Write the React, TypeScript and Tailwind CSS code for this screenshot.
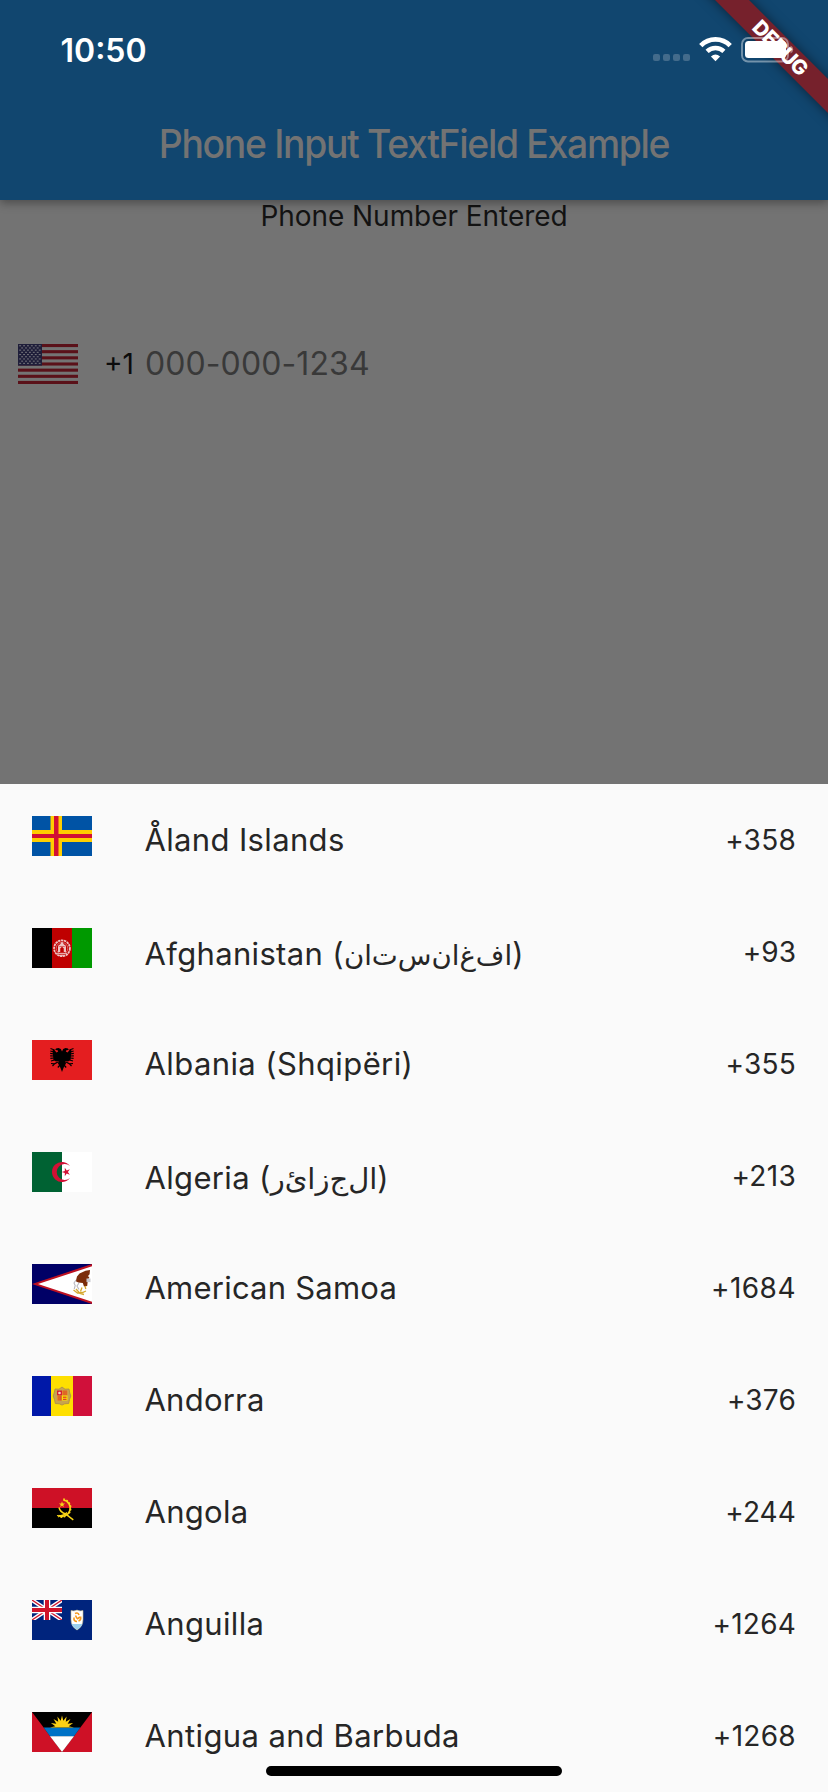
import type { ReactNode } from "react";

function Flag({ children }: { children: ReactNode }) {
  return (
    <svg className="block h-10 w-[60px] shrink-0" viewBox="0 0 60 40">
      {children}
    </svg>
  );
}

const starPoints = (cx: number, cy: number, outer: number, inner: number, count: number, start: number) =>
  Array.from({ length: count * 2 }, (_, i) => {
    const r = i % 2 ? inner : outer;
    const a = start + (i * Math.PI) / count;
    return `${(cx + r * Math.cos(a)).toFixed(2)},${(cy + r * Math.sin(a)).toFixed(2)}`;
  }).join(" ");

function UnitedStates() {
  const stars = [];
  for (let r = 0; r < 9; r++) {
    for (let c = 0; c < (r % 2 ? 5 : 6); c++) {
      stars.push(
        <rect key={`${r}-${c}`} x={1.2 + c * 3.9 + (r % 2 ? 1.95 : 0)} y={1.2 + r * 2.2} width="1.9" height="1.1" fill="#707078" />,
      );
    }
  }
  return (
    <Flag>
      <rect width="60" height="40" fill="#747474" />
      {[0, 1, 2, 3, 4, 5, 6].map((i) => (
        <rect key={i} y={i * 6.154} width="60" height="3.077" fill="#5a1119" />
      ))}
      <rect width="24" height="21.6" fill="#1f1e3a" />
      {stars}
    </Flag>
  );
}

function Aland() {
  return (
    <Flag>
      <rect width="60" height="40" fill="#0053a5" />
      <path d="M18.500 0h11.500v40h-11.500zM0 14h60v12h-60z" fill="#ffce00" />
      <path d="M22 0h4.500v40h-4.500zM0 18h60v4h-60z" fill="#d21034" />
    </Flag>
  );
}

function Afghanistan() {
  return (
    <Flag>
      <rect width="20" height="40" fill="#000" />
      <rect x="20" width="20" height="40" fill="#bf0000" />
      <rect x="40" width="20" height="40" fill="#009900" />
      <circle cx="30" cy="20.3" r="7.900" fill="none" stroke="#eec4c4" strokeWidth="1.800" strokeDasharray="2.400 0.600" />
      <circle cx="30" cy="20.300" r="5.800" fill="none" stroke="#dd8080" strokeWidth="0.800" />
      <path d="M26 24v-5q0-2 2-2.400l2-3.200l2 3.200q2 .4 2 2.400v5z" fill="#eec4c4" />
      <path d="M28.500 24v-3.500q1.500-2.500 3 0v3.500zM27.300 18.500h5.400" fill="#bf0000" stroke="#bf0000" strokeWidth=".5" />
      <path d="M25 25.300h10M27 27.300h6" stroke="#eec4c4" strokeWidth="1" />
    </Flag>
  );
}

function EagleHalf() {
  return (
    <g>
      <path d="M30 11.500L28.800 9L26.500 8L24 8.600L23.200 10L25.600 10.300L26.200 11.500L24.500 12.500L22 9.500L20.500 10.500L21.500 20L24 21.500L26.500 21L26 23.500L27.500 26L28.500 28L30 32Z" fill="#000" />
      <path d="M22.500 10L18.500 8.600M22 12L18.300 11M22 14L18.200 13.400M22 16L18.200 15.900M22 18L18.400 18.400M22.500 20L19 21" stroke="#000" strokeWidth="1.100" />
      <path d="M26 22L22.500 23.800L19 23.500M22.500 23.800L20.500 26M28 25L25.800 27.500" fill="none" stroke="#000" strokeWidth="1.200" />
    </g>
  );
}

function Albania() {
  return (
    <Flag>
      <rect width="60" height="40" fill="#e41e20" />
      <EagleHalf />
      <g transform="matrix(-1 0 0 1 60 0)">
        <EagleHalf />
      </g>
    </Flag>
  );
}

function Algeria() {
  return (
    <Flag>
      <rect width="30" height="40" fill="#006233" />
      <rect x="30" width="30" height="40" fill="#fff" />
      <path d="M38 14A10 10 0 1 0 38 26A8 8 0 1 1 38 14z" fill="#d21034" />
      <polygon points={starPoints(34.2, 20, 4.5, 1.7, 5, Math.PI)} fill="#d21034" />
    </Flag>
  );
}

function AmericanSamoa() {
  return (
    <Flag>
      <rect width="60" height="40" fill="#006" />
      <path d="M0 20L60 0v40z" fill="#bd1021" />
      <path d="M6 20L60 2.300v35.400z" fill="#fff" />
      <path d="M58 6l-4.500 .8-6 2.800-2.500 2.800-1.200 4.800 2.500 1.200 4.500 .6 1.200 3.500 3.200-.5 .6-5.500 1.600-3.500-1.600-.8 1.800-2z" fill="#7b2d0b" />
      <path d="M44 16l-2 3 1.200 2.500-1 3.500M47 19l-2 3 2 3.500" fill="none" stroke="#b9b9c0" strokeWidth="1.100" />
      <path d="M41.500 26l4 3 5-.5 3.500-1.500M44 25l4 4.500 4 1M50 23.500l-1.500 4M53 22l.8 3" fill="none" stroke="#d6a92e" strokeWidth="1.300" />
      <rect x="54.500" y="14.500" width="4" height="3.600" fill="#c9c9cf" />
    </Flag>
  );
}

function Andorra() {
  return (
    <Flag>
      <rect width="19" height="40" fill="#0018a8" />
      <rect x="19" width="22" height="40" fill="#fedf00" />
      <rect x="41" width="19" height="40" fill="#d0103a" />
      <path d="M23 13l4 .2 3-2.200 3 2.200 4-.2 .8 4 1 3-1.300 3.500-.8 4-4 .3-2.700 1.300-2.700-1.300-4-.3-.8-4-1.300-3.500 1-3z" fill="#c7a44e" stroke="#a8894c" strokeWidth=".8" />
      <rect x="25" y="14.500" width="5" height="5" fill="#d5202f" />
      <circle cx="27.500" cy="17" r="1.300" fill="#f4d9c0" />
      <path d="M30 14.500h5.500v5h-5.500zM25 19.500h5v5h-5z" fill="#e8862a" />
      <path d="M32 14.500v5M34 14.500v5M27 19.500v5M28.800 19.500v5" stroke="#cf3a20" strokeWidth=".8" />
      <rect x="30" y="19.500" width="5.500" height="5" fill="#fedf00" />
      <path d="M31 21.200h3.500M31 23.300h3.500" stroke="#d5202f" strokeWidth="1" />
    </Flag>
  );
}

function Angola() {
  return (
    <Flag>
      <rect width="60" height="20" fill="#ce1126" />
      <rect y="20" width="60" height="20" fill="#000" />
      <path d="M31.300 12A8.200 8.200 0 1 1 26.500 27.500" fill="none" stroke="#f9d616" strokeWidth="1.600" />
      <path d="M31.300 11A9.200 9.200 0 1 1 26 28.500" fill="none" stroke="#f9d616" strokeWidth="1.300" strokeDasharray="1.800 1.500" />
      <path d="M27 19.500q1 4.500 6.500 6.500l7.800 5.800" fill="none" stroke="#f9d616" strokeWidth="1.500" />
      <path d="M25 27.500q6 1.500 10-3" fill="none" stroke="#f9d616" strokeWidth="1.200" />
      <polygon points={starPoints(30, 16.5, 3.2, 1.3, 5, -Math.PI / 2)} fill="#f9d616" />
    </Flag>
  );
}

function Anguilla() {
  return (
    <Flag>
      <rect width="60" height="40" fill="#00247d" />
      <svg width="30" height="20" viewBox="0 0 30 20">
        <path d="M0 0L30 20M30 0L0 20" stroke="#fff" strokeWidth="4" />
        <path d="M0 0L30 20M30 0L0 20" stroke="#cf142b" strokeWidth="1.300" />
        <path d="M15 0v20M0 10h30" stroke="#fff" strokeWidth="6.600" />
        <path d="M15 0v20M0 10h30" stroke="#cf142b" strokeWidth="4" />
      </svg>
      <path d="M39 10.500q3 1 6-.4q3 1.400 6 .4v9q0 7-6 10.500q-6-3.500-6-10.500z" fill="#fff" stroke="#c3b98c" strokeWidth=".6" />
      <path d="M39.500 24h11q-1.500 3.500-5.500 5.700q-4-2.200-5.500-5.700z" fill="#9cd0ee" />
      <path d="M43 13.500q3-1.500 4 1.500M48.500 16.500q1 3.500-2 4.500M45 21.500q-3.500 0-3-4M43.500 15.500l1.500 3M48 17l-3 2" fill="none" stroke="#f79a1c" strokeWidth="1.600" />
    </Flag>
  );
}

function Antigua() {
  return (
    <Flag>
      <rect width="60" height="40" fill="#ce1126" />
      <path d="M0 0h60l-30 40z" fill="#000" />
      <path d="M11.600 15.500h36.800l-6.600 9h-23.600z" fill="#0072c6" />
      <path d="M18 24.200h24l-12 15.800z" fill="#fff" />
      <svg width="60" height="15.500" viewBox="0 0 60 15.500">
        <polygon points={starPoints(30, 15.5, 12, 6.8, 16, 0)} fill="#fcd116" />
      </svg>
    </Flag>
  );
}

/* Zero-width non-joiners keep every Arabic letter in its isolated form. */
const isolated = (word: string) => Array.from(word).join("\u200c");

type Country = {
  flag: ReactNode;
  name: string;
  native?: string;
  nativeClass?: string;
  code: string;
  nameClass: string;
  codeClass: string;
};

const countries: Country[] = [
  { flag: <Aland />, name: "Åland Islands", code: "+358", nameClass: "tracking-[0.35px]", codeClass: "tracking-[0.25px]" },
  { flag: <Afghanistan />, name: "Afghanistan", native: "افغانستان", nativeClass: "text-[27.6px]", code: "+93", nameClass: "tracking-[0.34px]", codeClass: "tracking-[0.06px]" },
  { flag: <Albania />, name: "Albania (Shqipëri)", code: "+355", nameClass: "tracking-[0.4px]", codeClass: "tracking-[0.25px]" },
  { flag: <Algeria />, name: "Algeria", native: "الجزائر", nativeClass: "text-[29px]", code: "+213", nameClass: "tracking-[0.34px]", codeClass: "tracking-[0.3px]" },
  { flag: <AmericanSamoa />, name: "American Samoa", code: "+1684", nameClass: "tracking-[0.22px]", codeClass: "tracking-[0.48px]" },
  { flag: <Andorra />, name: "Andorra", code: "+376", nameClass: "tracking-[0.23px]", codeClass: "tracking-[0.2px]" },
  { flag: <Angola />, name: "Angola", code: "+244", nameClass: "tracking-[0.3px]", codeClass: "tracking-[0.1px]" },
  { flag: <Anguilla />, name: "Anguilla", code: "+1264", nameClass: "tracking-[0.35px]", codeClass: "tracking-[0.2px]" },
  { flag: <Antigua />, name: "Antigua and Barbuda", code: "+1268", nameClass: "tracking-[0.4px]", codeClass: "tracking-[0.3px]" },
];

function CountryRow({ flag, name, native, nativeClass, code, nameClass, codeClass }: Country) {
  return (
    <li className="flex h-28 shrink-0 items-start px-8 text-[#262626]">
      <div className="pt-8">{flag}</div>
      <div className={`ml-[52.5px] flex-1 whitespace-nowrap text-[31px] leading-10 ${native ? "pt-[38px]" : "pt-9"} ${nameClass}`}>
        {name}
        {native && (
          <>
            {" ("}
            <bdi className={`font-['DejaVu_Sans',sans-serif] leading-none tracking-normal ${nativeClass}`}>{isolated(native)}</bdi>
            {")"}
          </>
        )}
      </div>
      <div className={`pt-9 text-[28px] leading-10 ${codeClass}`}>{code}</div>
    </li>
  );
}

function StatusIcons() {
  return (
    <svg className="block h-[26px] w-[142px]" viewBox="652 37 142 26">
      <g fill="#436b8b">
        <rect x="653" y="54" width="7" height="7" rx="2" />
        <rect x="663" y="54" width="7" height="7" rx="2" />
        <rect x="673" y="54" width="7" height="7" rx="2" />
        <rect x="683" y="54" width="7" height="7" rx="2" />
      </g>
      <g transform="translate(699 37)">
        <path d="M1.800 8.600A20.400 20.400 0 0 1 31.200 8.600" fill="none" stroke="#fff" strokeWidth="4.600" />
        <path d="M8.100 14.400A11.900 11.900 0 0 1 24.900 14.400" fill="none" stroke="#fff" strokeWidth="4.400" />
        <path d="M16.500 24.200L11.900 19.500Q16.500 15.400 21.100 19.500z" fill="#fff" />
      </g>
      <rect x="742" y="38" width="46" height="23.500" rx="6" fill="none" stroke="#fff" strokeOpacity=".42" strokeWidth="1.900" />
      <path d="M790.500 45.500q2.700 1 2.700 4t-2.700 4z" fill="#fff" fillOpacity=".42" />
      <rect x="745" y="41" width="41" height="17" rx="3.500" fill="#fff" />
    </svg>
  );
}

export default function App() {
  return (
    <div className="relative flex h-[1792px] w-[828px] flex-col overflow-hidden bg-[#737373] font-['Inter',sans-serif]">
      <header className="relative flex h-[200px] shrink-0 flex-col bg-[#11466f] shadow-[0_3px_9px_rgba(0,0,0,0.35)]">
        <div className="relative z-20 flex h-[88px] items-start justify-between pl-[60.5px] pr-[34px]">
          <span className="pt-[31px] text-[32px] font-semibold leading-10 text-white">10:50</span>
          <div className="pt-[37px]">
            <StatusIcons />
          </div>
        </div>
        <h1 className="flex h-28 origin-center scale-x-[0.945] items-center justify-center whitespace-nowrap text-[39.5px] font-medium leading-[48px] tracking-[-1.4px] text-[#737373]">
          Phone Input TextField Example
        </h1>
      </header>

      <div className="absolute left-[630px] top-9 z-10 flex h-6 w-[300px] rotate-45 items-center justify-center bg-[#76212c] shadow-[0_0_12px_rgba(0,0,0,0.5)]">
        <span className="text-[20.5px] font-extrabold leading-6 tracking-[-0.6px] text-white">DEBUG</span>
      </div>

      <main className="flex flex-1 flex-col">
        <p className="text-center text-[28px] leading-8 tracking-[-0.05px] text-[#131313]">Phone Number Entered</p>
        <div className="mt-28 flex items-start pl-[18px]">
          <UnitedStates />
          <span className="ml-[26px] text-[28px] leading-10 text-[#0c0c0c]">+1</span>
          <span className="ml-[11px] text-[32px] leading-10 tracking-[0.1px] text-[#393939]">000-000-1234</span>
        </div>
      </main>

      <ul className="flex h-[1008px] shrink-0 flex-col bg-[#fafafa]">
        {countries.map((country) => (
          <CountryRow key={country.name} {...country} />
        ))}
      </ul>

      <div className="absolute bottom-4 left-[266px] h-2.5 w-[296px] rounded-full bg-black" />
    </div>
  );
}
